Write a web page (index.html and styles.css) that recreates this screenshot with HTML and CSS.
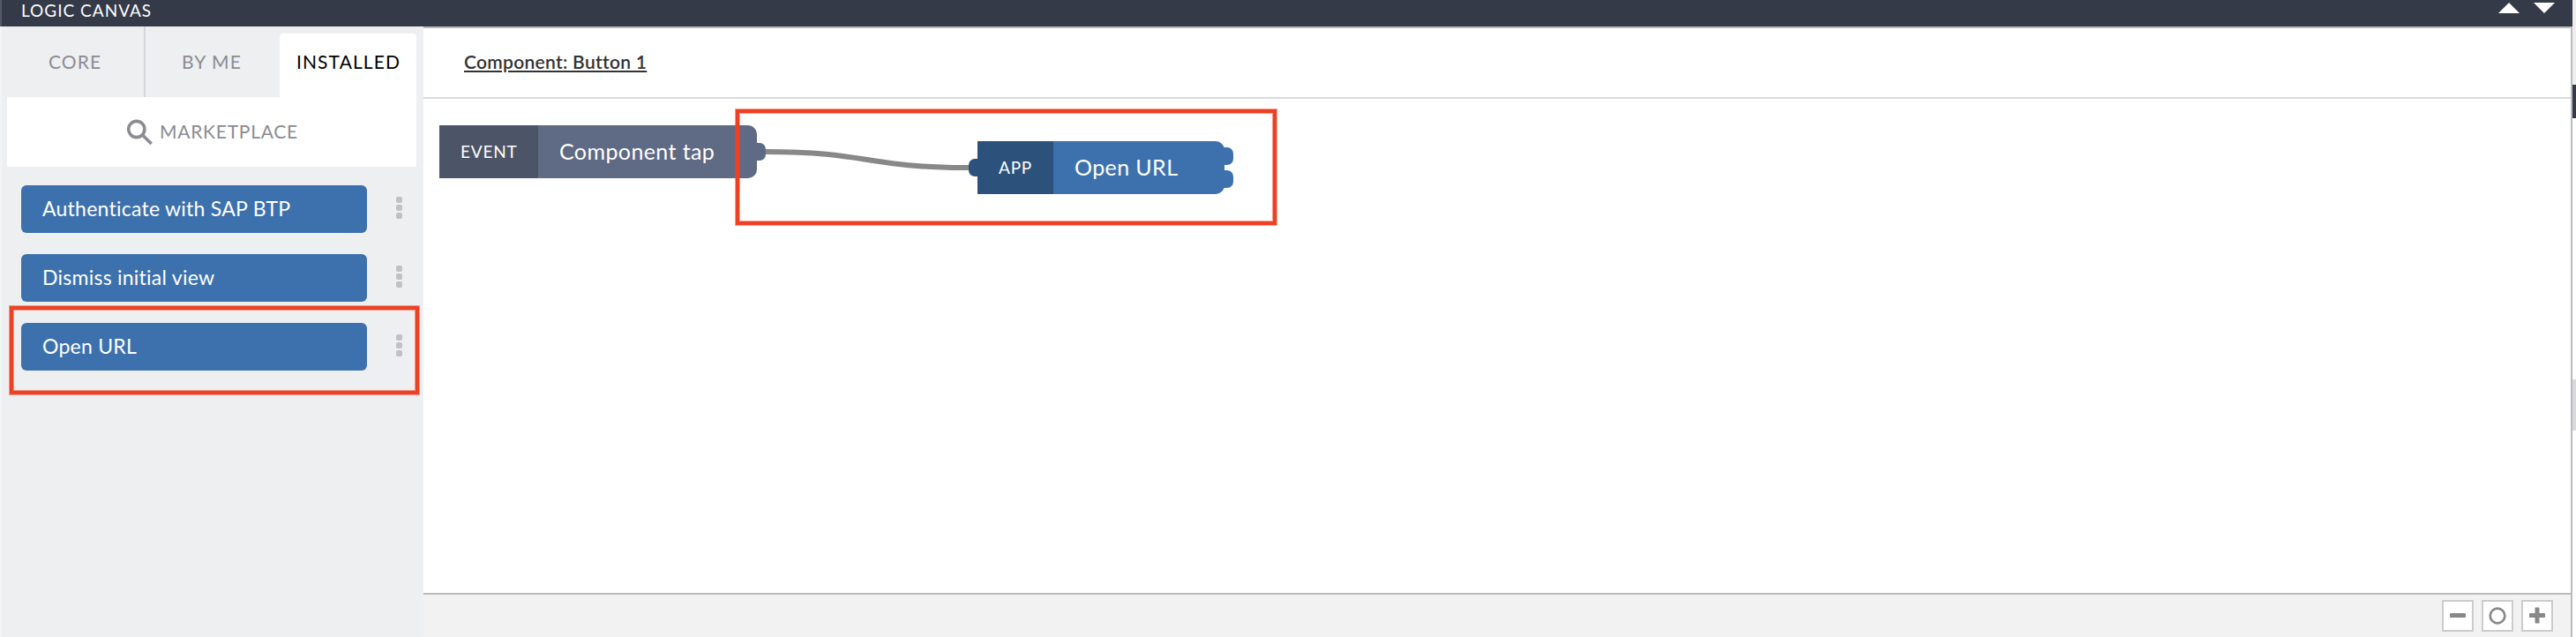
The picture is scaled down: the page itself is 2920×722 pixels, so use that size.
FILE: index.html
```
<!DOCTYPE html>
<html lang="en">
<head>
<meta charset="utf-8">
<title>Logic canvas</title>
<link rel="stylesheet" href="styles.css">
</head>
<body>
<div class="app">
  <div class="window">
    <header class="topbar">
      <h1 class="topbar-title">LOGIC CANVAS</h1>
      <svg class="arrow" width="24" height="12" viewBox="0 0 24 12"><path d="M0 12 12 0 24 12z"/></svg>
      <svg class="arrow" width="24" height="12" viewBox="0 0 24 12"><path d="M0 0H24L12 12z"/></svg>
    </header>
    <div class="body">
      <aside class="sidebar">
        <nav class="tabs">
          <a class="tab tab-core">CORE</a>
          <a class="tab tab-me">BY ME</a>
          <a class="tab tab-installed">INSTALLED</a>
        </nav>
        <div class="market">
          <svg class="search" width="30" height="30" viewBox="0 0 30 30"><circle cx="10.800" cy="11.500" r="9.100"/><path d="M17.500 18 27.700 28"/></svg>
          <span class="market-label">MARKETPLACE</span>
        </div>
        <ul class="list">
          <li class="item"><span class="pill">Authenticate with SAP BTP</span><span class="dots"><i></i><i></i><i></i></span></li>
          <li class="item"><span class="pill">Dismiss initial view</span><span class="dots"><i></i><i></i><i></i></span></li>
          <li class="item"><span class="pill">Open URL</span><span class="dots"><i></i><i></i><i></i></span></li>
        </ul>
        <div class="mark mark-side"></div>
      </aside>
      <main class="main">
        <div class="crumb"><a class="crumb-link">Component: Button 1</a></div>
        <div class="canvas">
          <svg class="wire" width="230" height="30" viewBox="0 0 230 30"><path d="M0 6C115 6 115 24 230 24"/></svg>
          <div class="node node-event">
            <span class="kind">EVENT</span><span class="name">Component tap</span>
            <b class="port"></b>
          </div>
          <div class="node node-app">
            <b class="port port-in"></b>
            <span class="kind">APP</span><span class="name">Open URL</span>
            <b class="port port-top"></b><b class="port port-bottom"></b>
          </div>
          <div class="mark mark-canvas"></div>
        </div>
        <footer class="footer">
          <span class="zoom"><svg width="32" height="32" viewBox="0 0 32 32"><rect x="7" y="13" width="18" height="5" rx="1"/></svg></span>
          <span class="zoom"><svg width="32" height="32" viewBox="0 0 32 32"><circle cx="16" cy="16" r="8.3"/></svg></span>
          <span class="zoom"><svg width="32" height="32" viewBox="0 0 32 32"><rect x="7" y="13" width="18" height="5" rx="1"/><rect x="13.500" y="6.500" width="5" height="18" rx="1"/></svg></span>
        </footer>
      </main>
    </div>
  </div>
  <div class="edge"><div class="edge-top"></div><div class="edge-dark"></div><div class="edge-gap"></div><div class="edge-grip"></div></div>
</div>
</body>
</html>
```
FILE: styles.css
```
* { box-sizing: border-box; }
body { margin: 0; background: #fff; font-family: Lato, "Open Sans", sans-serif; overflow: hidden; }
.app { display: flex; width: 2920px; height: 722px; }
.window { flex: 1; display: flex; flex-direction: column; }

.topbar { height: 30px; display: flex; align-items: flex-start; gap: 16px; padding: 3px 20px 0 22px; background: #343a48; border-left: 2px solid #545968; }
.topbar-title { margin: -3px auto 0 0; color: #fff; font-size: 19px; font-weight: 400; line-height: 24px; letter-spacing: 1px; white-space: nowrap; }
.arrow { display: block; fill: #fff; }

.body { flex: 1; display: flex; min-height: 0; }
.sidebar { position: relative; width: 480px; border-left: 2px solid #f3f4f6; background: #eeeff1; padding-left: 6px; }
.tabs { display: flex; align-items: flex-end; height: 80px; }
.tab { color: #8b8c92; font-size: 21px; line-height: 24px; letter-spacing: 1.1px; white-space: nowrap; }
.tab-core { width: 157px; height: 80px; padding: 28px 0 0 47px; border-right: 2px solid #d5d7dc; }
.tab-me { width: 152px; height: 80px; padding: 28px 0 0 41px; }
.tab-installed { width: 155px; height: 72px; padding: 20px 0 0 19px; background: #fff; border-radius: 4px 4px 0 0; color: #000; }
.market { width: 464px; height: 79px; display: flex; align-items: flex-start; padding: 25px 0 0 136px; background: #fff; color: #8b8c92; border-radius: 0 0 2px 2px; }
.search { fill: none; stroke: #8b8c92; stroke-width: 3.6; }
.market-label { margin: 2px 0 0 7px; font-size: 21px; line-height: 24px; letter-spacing: .75px; white-space: nowrap; }
.list { list-style: none; margin: 21px 0 0 16px; padding: 0; display: grid; gap: 24px; }
.item { display: flex; align-items: center; gap: 33px; }
.pill { width: 392px; height: 54px; padding-left: 24px; border-radius: 6px; background: #3d71ad; color: #fff; font-size: 23px; line-height: 53px; letter-spacing: .25px; white-space: nowrap; }
.dots { display: grid; gap: 2px; margin-top: -3px; }
.dots i { display: block; width: 7px; height: 7px; border-radius: 2px; background: #c1c1c2; }

.mark { position: absolute; border: 4px solid #ed4126; box-shadow: 0 0 0 1px rgba(237, 65, 38, .5), inset 0 0 0 1px rgba(237, 65, 38, .5); }
.mark-side { left: 9px; top: 317px; width: 464px; height: 100px; }
.mark-canvas { left: 354px; top: 12px; width: 613px; height: 131px; }

.main { flex: 1; display: flex; flex-direction: column; border-top: 2px solid #bbb; border-right: 2px solid #bbb; }
.crumb { height: 80px; padding: 26px 0 0 46px; border-bottom: 2px solid #d9d9df; }
.crumb-link { color: #333; font-size: 21px; font-weight: 600; line-height: 24px; letter-spacing: .3px; text-decoration: underline 2px; text-underline-offset: 2px; white-space: nowrap; }
.canvas { position: relative; flex: 1; }
.wire { position: absolute; left: 388px; top: 54px; fill: none; stroke: #888; stroke-width: 6; }
.node { position: absolute; display: flex; height: 60px; color: #fff; line-height: 59px; white-space: nowrap; }
.node-event { left: 18px; top: 30px; width: 360px; background: #5f6a84; border-radius: 0 10px 10px 0; }
.node-app { left: 628px; top: 48px; width: 280px; background: #3d71ad; border-radius: 0 10px 10px 0; }
.kind { padding-left: 24px; font-size: 19px; letter-spacing: .8px; background: #4c5567; }
.node-event .kind { width: 112px; }
.node-app .kind { width: 86px; background: #2c527c; }
.name { padding-left: 24px; font-size: 25px; letter-spacing: .4px; }
.port { position: absolute; right: -10px; top: 20px; width: 10px; height: 20px; border-radius: 0 7px 7px 0; background: #5f6a84; }
.port-in { left: -10px; right: auto; border-radius: 7px 0 0 7px; background: #2c527c; }
.port-top, .port-bottom { width: 12px; background: #3d71ad; }
.port-top { top: 7px; }
.port-bottom { top: 33px; }

.footer { height: 50px; display: flex; justify-content: flex-end; gap: 9px; padding: 6px 20px 0 0; background: #f2f2f2; border-top: 2px solid #bbb; }
.zoom { width: 36px; height: 36px; border: 2px solid #ccc; background: #fff; }
.zoom svg { display: block; fill: #888; }
.zoom circle { fill: none; stroke: #888; stroke-width: 2.7; }

.edge { width: 4px; display: flex; flex-direction: column; }
.edge-top { height: 96px; background: #eee; }
.edge-dark { height: 38px; background: #343a48; }
.edge-gap { height: 296px; }
.edge-grip { height: 58px; background: #d9d9dd; }
```
